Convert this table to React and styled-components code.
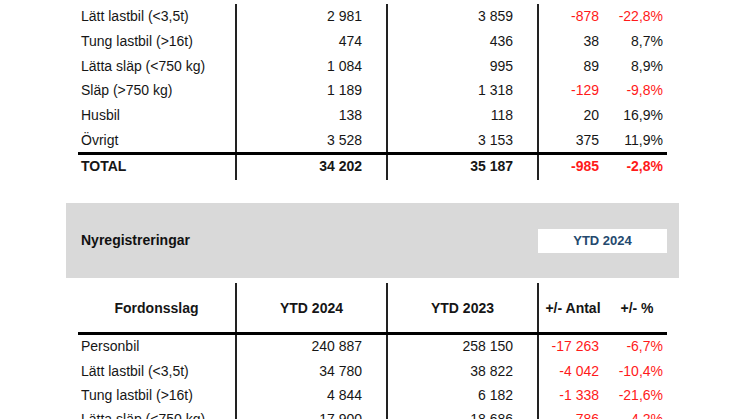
import React from 'react'
import styled, { createGlobalStyle } from 'styled-components'

const GlobalStyle = createGlobalStyle`
  html, body {
    margin: 0;
    padding: 0;
    background: #fff;
  }
  body {
    font-family: "Liberation Sans", Arial, sans-serif;
    color: #161616;
    overflow: hidden;
  }
`

const Page = styled.div`
  width: 746px;
  height: 419px;
  overflow: hidden;
`

const Table = styled.div`
  margin: 0 79px 0 78px;
  width: 589px;
  padding-top: ${({ $top }) => $top || 0}px;
`

const COLS = '159px 151px 151px 68px 60px'

const Row = styled.div`
  display: grid;
  grid-template-columns: ${COLS};
  height: ${({ $height }) => $height || 24.8}px;
  align-items: center;
  font-size: 14px;
  font-weight: ${({ $bold }) => ($bold ? 700 : 400)};
  border-bottom: ${({ $rule }) => ($rule ? '3px solid #000' : 'none')};
`

const Cell = styled.div`
  height: 100%;
  display: flex;
  align-items: center;
  justify-content: ${({ $align }) =>
    $align === 'left' ? 'flex-start' : $align === 'center' ? 'center' : 'flex-end'};
  padding: ${({ $pad }) => $pad || '0'};
  color: ${({ $neg }) => ($neg ? '#ff1a1a' : 'inherit')};
  border-right: ${({ $line }) => ($line ? '2px solid #222' : 'none')};
  box-sizing: border-box;
  white-space: nowrap;
`

const Band = styled.div`
  margin: 23px 67px 5px 66px;
  height: 75px;
  background: #d9d9d9;
  display: flex;
  align-items: center;
  justify-content: space-between;
  padding: 0 12px 0 15px;
`

const BandTitle = styled.div`
  font-size: 14px;
  font-weight: 700;
  color: #111;
  padding-bottom: 1px;
`

const PeriodBox = styled.div`
  width: 129px;
  height: 24px;
  background: #fff;
  display: flex;
  align-items: center;
  justify-content: center;
  font-size: 13px;
  font-weight: 700;
  color: #24496e;
`

const topRows = [
  ['Lätt lastbil (<3,5t)', '2 981', '3 859', '-878', '-22,8%'],
  ['Tung lastbil (>16t)', '474', '436', '38', '8,7%'],
  ['Lätta släp (<750 kg)', '1 084', '995', '89', '8,9%'],
  ['Släp (>750 kg)', '1 189', '1 318', '-129', '-9,8%'],
  ['Husbil', '138', '118', '20', '16,9%'],
  ['Övrigt', '3 528', '3 153', '375', '11,9%'],
]

const ytdRows = [
  ['Personbil', '240 887', '258 150', '-17 263', '-6,7%'],
  ['Lätt lastbil (<3,5t)', '34 780', '38 822', '-4 042', '-10,4%'],
  ['Tung lastbil (>16t)', '4 844', '6 182', '-1 338', '-21,6%'],
  ['Lätta släp (<750 kg)', '17 900', '18 686', '-786', '-4,2%'],
]

const DataRow = ({ row, bold, rule, lift, height }) => {
  const neg = row[3].startsWith('-')
  const b = lift ? `${lift}px` : '0'
  return (
    <Row $bold={bold} $rule={rule} $height={height}>
      <Cell $align="left" $pad={`0 0 ${b} 3px`} $line>{row[0]}</Cell>
      <Cell $pad={`0 24px ${b} 0`} $line>{row[1]}</Cell>
      <Cell $pad={`0 24px ${b} 0`} $line>{row[2]}</Cell>
      <Cell $pad={`0 8px ${b} 0`} $neg={neg}>{row[3]}</Cell>
      <Cell $pad={`0 4px ${b} 0`} $neg={neg}>{row[4]}</Cell>
    </Row>
  )
}

const App = () => (
  <Page>
    <GlobalStyle />
    <Table $top={3.6}>
      {topRows.map((row, i) => (
        <DataRow key={row[0]} row={row} rule={i === topRows.length - 1} />
      ))}
      <DataRow row={['TOTAL', '34 202', '35 187', '-985', '-2,8%']} bold lift={3} />
    </Table>

    <Band>
      <BandTitle>Nyregistreringar</BandTitle>
      <PeriodBox>YTD 2024</PeriodBox>
    </Band>

    <Table>
      <Row $height={49} $bold $rule>
        <Cell $align="center" $line>Fordonsslag</Cell>
        <Cell $align="center" $line>YTD 2024</Cell>
        <Cell $align="center" $line>YTD 2023</Cell>
        <Cell $align="center">+/- Antal</Cell>
        <Cell $align="center">+/- %</Cell>
      </Row>
      {ytdRows.map(row => (
        <DataRow key={row[0]} row={row} lift={2} height={24.3} />
      ))}
    </Table>
  </Page>
)

export default App
